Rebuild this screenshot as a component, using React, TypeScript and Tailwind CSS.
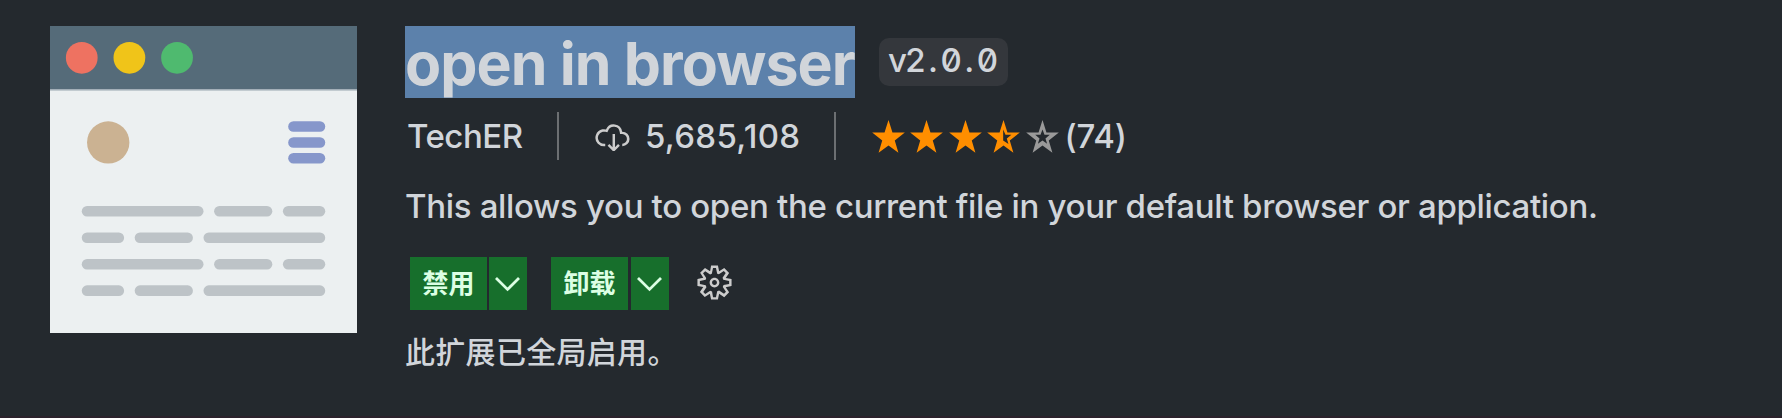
function Bar({ x, y, w, c = "#bdc3c7" }: { x: number; y: number; w: number; c?: string }) {
  return <rect x={x} y={y} width={w} height="2" rx="1" fill={c} />;
}

function Logo() {
  return (
    <svg viewBox="0 0 58 58" className="size-[307px] shrink-0">
      <rect width="58" height="58" fill="#ecf0f1" />
      <rect width="58" height="12" fill="#556b79" />
      <rect y="11.9" width="58" height="0.3" fill="#a3afb8" />
      <circle cx="6" cy="6" r="3" fill="#ee7261" />
      <circle cx="15" cy="6" r="3" fill="#f0c419" />
      <circle cx="24" cy="6" r="3" fill="#4fba6f" />
      <circle cx="11" cy="22" r="4" fill="#cbb292" />
      <Bar x={45} y={18} w={7} c="#8697cb" />
      <Bar x={45} y={21} w={7} c="#8697cb" />
      <Bar x={45} y={24} w={7} c="#8697cb" />
      {[34, 44].map((y) => (
        <g key={y}>
          <Bar x={6} y={y} w={23} />
          <Bar x={31} y={y} w={11} />
          <Bar x={44} y={y} w={8} />
          <Bar x={6} y={y + 5} w={8} />
          <Bar x={16} y={y + 5} w={11} />
          <Bar x={29} y={y + 5} w={23} />
        </g>
      ))}
    </svg>
  );
}

function CloudDownload({ className }: { className: string }) {
  return (
    <svg viewBox="0 0 16 16" fill="currentColor" className={className}>
      <path d="M11.957 6h.05a2.99 2.99 0 0 1 2.116.879 3.003 3.003 0 0 1 0 4.242 2.99 2.99 0 0 1-2.117.879v-1a2.002 2.002 0 0 0 0-4h-.914l-.123-.857a2.49 2.49 0 0 0-2.126-2.122A2.478 2.478 0 0 0 6.231 5.5l-.333.762-.809-.189A2.49 2.49 0 0 0 4.523 6c-.662 0-1.297.263-1.764.732A2.503 2.503 0 0 0 4.523 11h.498v1h-.498a3.486 3.486 0 0 1-2.628-1.16 3.502 3.502 0 0 1 1.958-5.78 3.462 3.462 0 0 1 1.468.04 3.486 3.486 0 0 1 3.657-2.06A3.479 3.479 0 0 1 11.957 6zm-5.25 5.121l1.314 1.314V7h.994v5.4l1.278-1.279.707.707-2.146 2.147h-.708L6 11.829l.707-.708z" />
    </svg>
  );
}

function Gear({ className }: { className: string }) {
  return (
    <svg viewBox="0 0 16 16" fill="currentColor" fillRule="evenodd" className={className}>
      <path d="M9.1 4.4L8.6 2H7.4l-.5 2.4-.7.3-2-1.3-.9.8 1.3 2-.2.7-2.4.5v1.2l2.4.5.3.8-1.3 2 .8.8 2-1.3.8.3.4 2.3h1.2l.5-2.4.8-.3 2 1.3.8-.8-1.3-2 .3-.8 2.3-.4V7.4l-2.4-.5-.3-.8 1.3-2-.8-.8-2 1.3-.7-.2zM9.4 1l.5 2.4L12 2.1l2 2-1.4 2.1 2.4.4v2.8l-2.4.5L14 12l-2 2-2.1-1.4-.5 2.4H6.6l-.5-2.4L4 13.9l-2-2 1.4-2.1L1 9.4V6.6l2.4-.5L2.1 4l2-2 2.1 1.4.4-2.4h2.8zm.6 7c0 1.1-.9 2-2 2s-2-.9-2-2 .9-2 2-2 2 .9 2 2zM8 9c.6 0 1-.4 1-1s-.4-1-1-1-1 .4-1 1 .4 1 1 1z" />
    </svg>
  );
}

const STAR = "M50 0L62 38H99.5L69 62L80 99L50 77L20 99L31 62L.5 38H38Z";
const HOLES = {
  full: "",
  half: "M49 29L56 45H74L60 56L65 73L49 62Z",
  empty: "M50 29L56 45H72L59 56L64 72L50 62L36 72L41 56L28 45H44Z",
};

function Star({ kind, color = "#ff8e00" }: { kind: keyof typeof HOLES; color?: string }) {
  return (
    <svg viewBox="0 0 100 100" className="size-[33px]">
      <path d={STAR + HOLES[kind]} fill={color} fillRule="evenodd" />
    </svg>
  );
}

function Action({ label, gap }: { label: string; gap: string }) {
  return (
    <div className={"flex h-[53px] text-[#dcffe4] " + gap}>
      <button className="w-[77px] bg-[#176f2c] text-[26px] font-bold leading-[53px]">{label}</button>
      <button className="flex w-[38px] items-center justify-center bg-[#176f2c]">
        <svg viewBox="0 0 26 16" fill="none" stroke="currentColor" strokeWidth="2.8" className="h-4 w-[26px]">
          <path d="M1 2L12.5 13.4L24 2" />
        </svg>
      </button>
    </div>
  );
}

export default function App() {
  return (
    <div className="flex h-[418px] w-[1782px] gap-12 overflow-hidden border-b-2 border-[#2b222c] bg-[#24292e] pl-[50px] pt-[26px] font-['Inter','Noto_Sans_CJK_SC',sans-serif] text-[#d1d5da]">
      <Logo />
      <div className="flex flex-col whitespace-nowrap">
        <div className="flex h-[72px] gap-6">
          <h1 className="w-[450px] bg-[#5c81ab] text-[59px] font-bold leading-[75px] tracking-[-0.9px]">open in browser</h1>
          <span className="mt-3 h-12 w-[129px] rounded-[10px] bg-[#34373c] pl-[9px] text-[33px] font-[450] leading-[44px] tracking-[-1.6px] [font-feature-settings:'zero']">
            v2<span className="px-[4px]">.</span>0<span className="px-[4px]">.</span>0
          </span>
        </div>
        <div className="mt-[14px] flex h-12 items-center text-[33px] font-[450] leading-[50px]">
          <span className="w-[152px] pl-[2px] tracking-[-0.5px]">TechER</span>
          <span className="h-12 w-[2px] bg-[#6c6f72]" />
          <CloudDownload className="ml-[34px] size-[39px] text-[#cccccc]" />
          <span className="ml-[13px] w-[189px] tracking-[0.3px]">5,685,108</span>
          <span className="h-12 w-[2px] bg-[#6c6f72]" />
          <div className="ml-[36px] flex gap-[5.4px]">
            <Star kind="full" />
            <Star kind="full" />
            <Star kind="full" />
            <Star kind="half" />
            <Star kind="empty" color="#9a9a9a" />
          </div>
          <span className="ml-[6px] tracking-[-0.2px]">(74)</span>
        </div>
        <p className="mt-[24px] h-[44px] text-[33px] font-[450] leading-[44px] tracking-[-0.33px]">
          This allows you to open the current file in your default browser or application.
        </p>
        <div className="mt-[29px] flex h-[53px] pl-[5px]">
          <Action label="禁用" gap="gap-[2px]" />
          <div className="ml-6">
            <Action label="卸载" gap="gap-[3px]" />
          </div>
          <Gear className="ml-[26px] mt-[6px] size-[39px] text-[#cccccc]" />
        </div>
        <p className="mt-[20px] text-[30px] font-medium leading-[44px] tracking-[0.3px]">此扩展已全局启用。</p>
      </div>
    </div>
  );
}
